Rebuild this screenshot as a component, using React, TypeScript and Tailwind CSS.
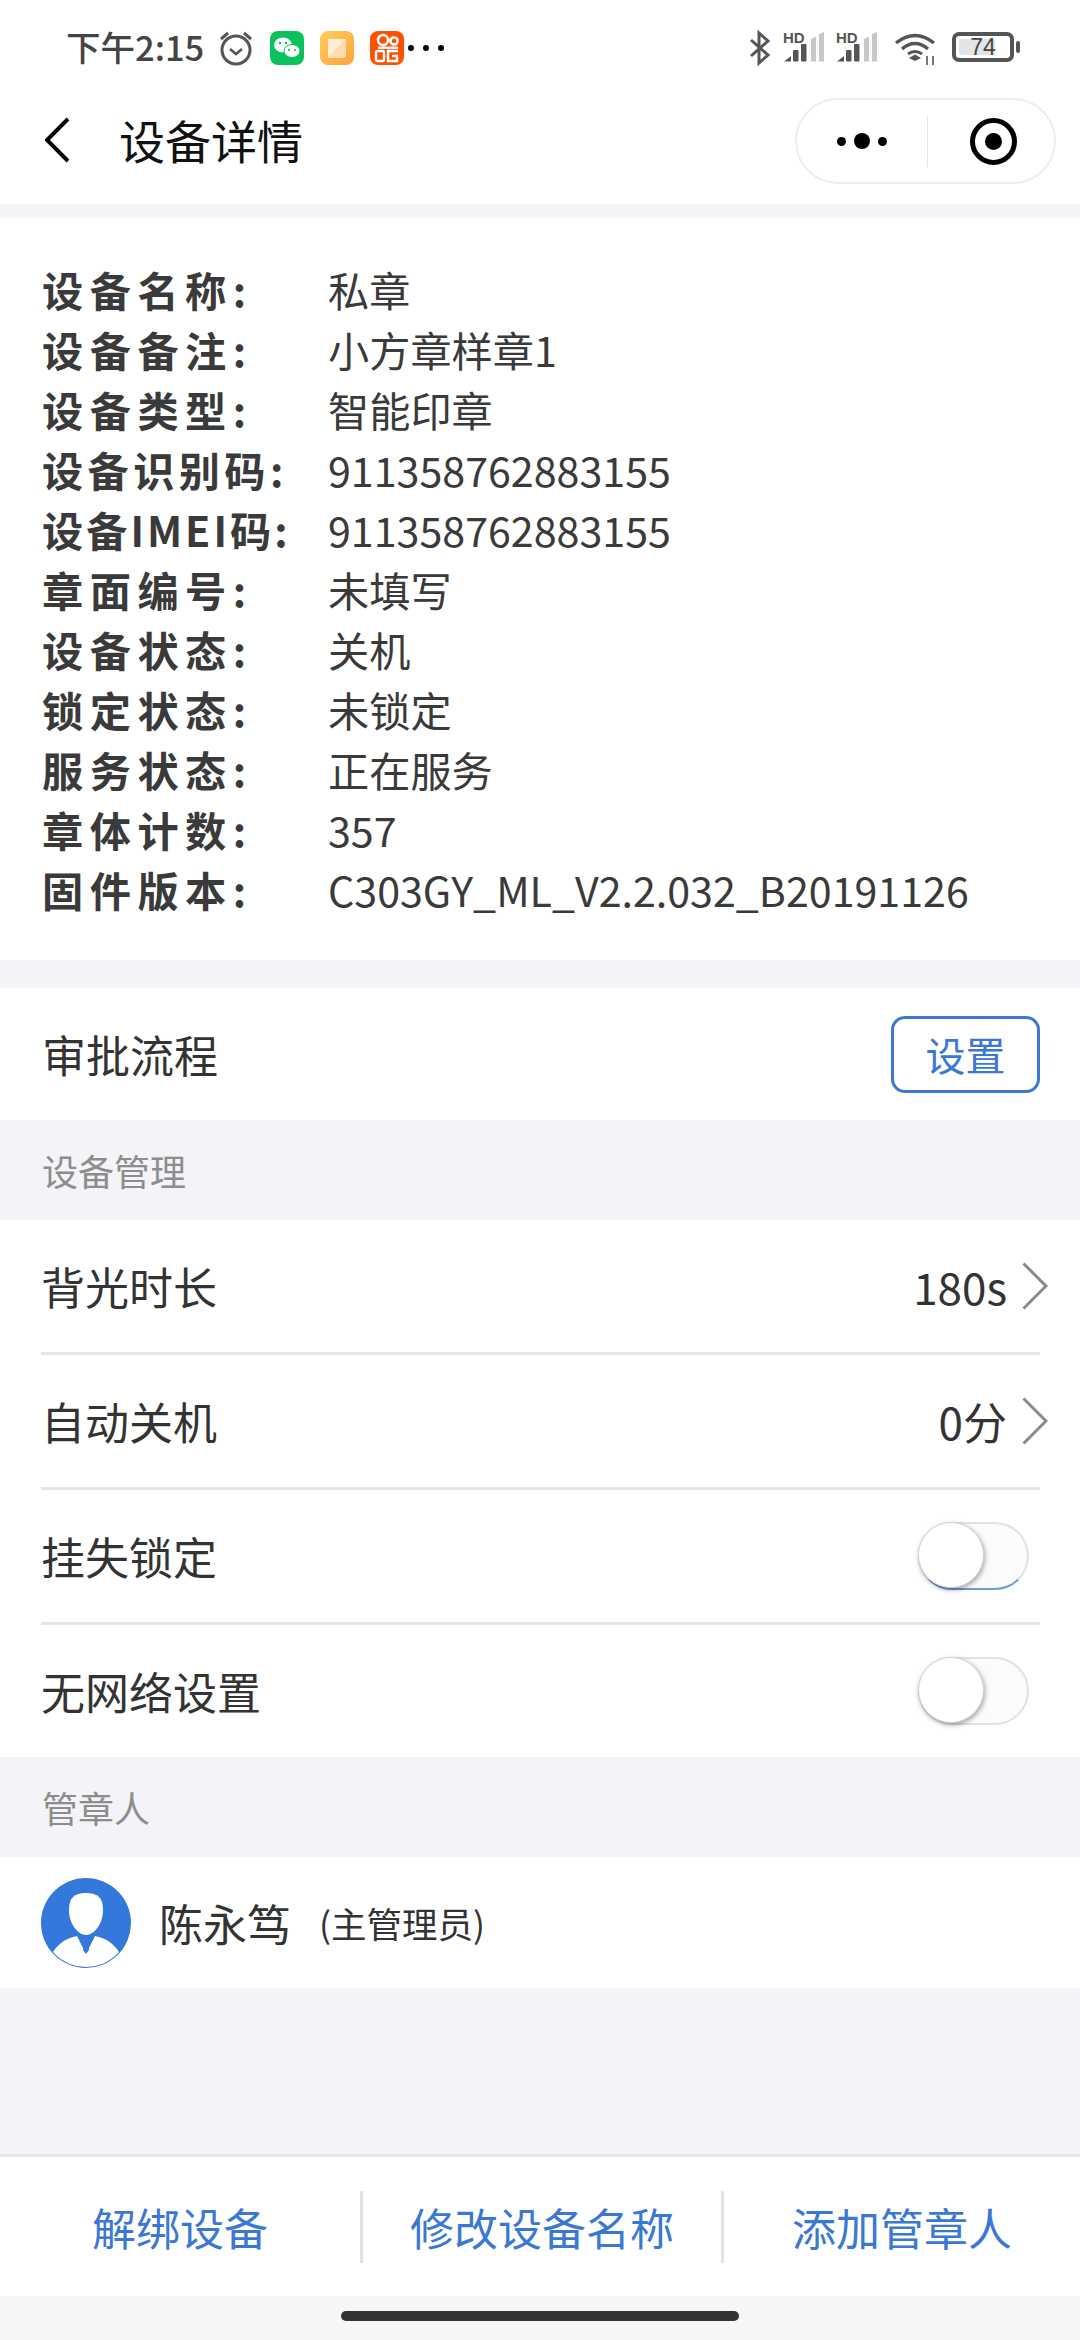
import React from "react";

const infoRows: { label: string; value: string; track: string }[] = [
  { label: "设备名称:", value: "私章", track: "tracking-[6.5px]" },
  { label: "设备备注:", value: "小方章样章1", track: "tracking-[6.5px]" },
  { label: "设备类型:", value: "智能印章", track: "tracking-[6.5px]" },
  { label: "设备识别码:", value: "911358762883155", track: "tracking-[4.4px]" },
  { label: "设备IMEI码:", value: "911358762883155", track: "tracking-[3px]" },
  { label: "章面编号:", value: "未填写", track: "tracking-[6.5px]" },
  { label: "设备状态:", value: "关机", track: "tracking-[6.5px]" },
  { label: "锁定状态:", value: "未锁定", track: "tracking-[6.5px]" },
  { label: "服务状态:", value: "正在服务", track: "tracking-[6.5px]" },
  { label: "章体计数:", value: "357", track: "tracking-[6.5px]" },
  { label: "固件版本:", value: "C303GY_ML_V2.2.032_B20191126", track: "tracking-[6.5px]" },
];

function Signal() {
  return (
    <svg width="42" height="34" viewBox="0 -2 42 34" className="block mb-[4px]">
      <text x="0" y="12" fontFamily="Liberation Sans" fontWeight="700" fontSize="15" fill="#555">HD</text>
      <path d="M1 30.5 L8 25 V30.5 Z" fill="#555" />
      <rect x="10" y="19" width="5.5" height="11.5" rx="1" fill="#555" />
      <rect x="18" y="13" width="5.5" height="17.5" rx="1" fill="#555" />
      <path d="M28 8 L33 5.5 V30.5 H28 Z" fill="#c8c8c8" />
      <path d="M36 3 L41 1 V30.5 H36 Z" fill="#c8c8c8" />
    </svg>
  );
}

function Chevron() {
  return (
    <svg width="26" height="48" viewBox="0 0 26 48" className="block">
      <path d="M1.5 1.5 L24 24 L1.5 46.5" fill="none" stroke="#8a8a8a" strokeWidth="3" />
    </svg>
  );
}

function Toggle({ blue }: { blue?: boolean }) {
  return (
    <div className={`relative w-[111px] h-[68px] rounded-full border-2 border-[#dfe2e6] bg-[#fbfbfb] ${blue ? "border-b-[#6f9ad8]" : ""}`}>
      <div className="absolute left-[-2px] top-[-2px] w-[66px] h-[66px] rounded-full bg-white border border-[#d4d4d4] shadow-[1px_2px_5px_rgba(0,0,0,0.35)]" />
    </div>
  );
}

function SectionTitle({ text }: { text: string }) {
  return <div className="h-[100px] px-[42px] flex items-center text-[36px] text-[#8d8d8d] shrink-0">{text}</div>;
}

function SettingRow({ label, last, children }: { label: string; last?: boolean; children: React.ReactNode }) {
  return (
    <div className={`ml-[41px] mr-[40px] flex items-center justify-between ${last ? "h-[132px]" : "h-[135px] border-b-[3px] border-[#e5e5e5]"}`}>
      <span className="text-[44px] text-[#333]">{label}</span>
      {children}
    </div>
  );
}

export default function App() {
  return (
    <div className="w-[1080px] h-[2340px] flex flex-col bg-[#f3f3f8] font-['Noto_Sans_CJK_SC','Noto_Sans',sans-serif] overflow-hidden">
      {/* status bar */}
      <div className="h-[94px] bg-white flex items-center pl-[66px] pr-[66px] pt-[2px] shrink-0">
        <span className="text-[34.5px] font-medium text-[#444] leading-none w-[152px] whitespace-nowrap mb-[3px]">下午2:15</span>
        <svg width="36" height="36" viewBox="0 0 36 36">
          <circle cx="18" cy="20" r="14" fill="none" stroke="#555" strokeWidth="3" />
          <path d="M12 19 L18 24 L24 19" fill="none" stroke="#555" strokeWidth="2.5" />
          <path d="M3 9 L10 3 M33 9 L26 3" stroke="#555" strokeWidth="3" />
        </svg>
        <svg width="34" height="34" viewBox="0 0 34 34" className="ml-[16px]">
          <rect width="34" height="34" rx="8" fill="#0ac15c" />
          <ellipse cx="13" cy="14" rx="9" ry="7.5" fill="#fff" />
          <ellipse cx="22" cy="20" rx="8" ry="6.5" fill="#fff" stroke="#0ac15c" strokeWidth="1" />
          <circle cx="10" cy="12" r="1.2" fill="#0ac15c" />
          <circle cx="16" cy="12" r="1.2" fill="#0ac15c" />
          <circle cx="19" cy="19" r="1.1" fill="#0ac15c" />
          <circle cx="25" cy="19" r="1.1" fill="#0ac15c" />
        </svg>
        <svg width="34" height="34" viewBox="0 0 34 34" className="ml-[16px]">
          <defs>
            <linearGradient id="og" x1="0" y1="0" x2="1" y2="1">
              <stop offset="0" stopColor="#ffcf5c" />
              <stop offset="1" stopColor="#ffa23a" />
            </linearGradient>
          </defs>
          <rect width="34" height="34" rx="8" fill="url(#og)" />
          <path d="M8 8 H26 V11 L10 27 H8 Z" fill="#ffeed6" />
          <path d="M8 27 L26 8 V24 Q26 27 23 27 Z" fill="#ffdcae" />
        </svg>
        <svg width="34" height="34" viewBox="0 0 34 34" className="ml-[16px]">
          <rect width="34" height="34" rx="8" fill="#ff5000" />
          <circle cx="13" cy="9" r="5" fill="none" stroke="#fff" strokeWidth="2.5" />
          <circle cx="24" cy="10" r="3.6" fill="none" stroke="#fff" strokeWidth="2.5" />
          <rect x="8" y="15.5" width="20" height="2.5" fill="#fff" />
          <rect x="6" y="20" width="8" height="10" rx="1.5" fill="none" stroke="#fff" strokeWidth="2.4" />
          <path d="M28 20 H18 V30 H27 V25 H22" fill="none" stroke="#fff" strokeWidth="2.4" />
        </svg>
        <div className="ml-[4px] flex gap-[9px]">
          <div className="w-[6px] h-[6px] rounded-full bg-black" />
          <div className="w-[6px] h-[6px] rounded-full bg-black" />
          <div className="w-[6px] h-[6px] rounded-full bg-black" />
        </div>
        <div className="flex-1" />
        <svg width="22" height="36" viewBox="0 0 22 36">
          <path d="M2 10 L19 25 L10 33 V3 L19 11 L2 26" fill="none" stroke="#555" strokeWidth="3" />
        </svg>
        <div className="ml-[12px]"><Signal /></div>
        <div className="ml-[11px]"><Signal /></div>
        <svg width="42" height="34" viewBox="0 0 42 34" className="ml-[16px] mt-[2px]">
          <path d="M2 11 Q21 -4 40 11" fill="none" stroke="#555" strokeWidth="3.5" />
          <path d="M8 17 Q21 6 34 17" fill="none" stroke="#555" strokeWidth="3.5" />
          <path d="M14 22 Q21 17 28 22" fill="none" stroke="#555" strokeWidth="3" />
          <path d="M15 26 L21 22.5 L27 26 L21 29 Z" fill="#555" />
          <path d="M33 24 V33 M39 24 V33" stroke="#555" strokeWidth="1.6" />
        </svg>
        <div className="ml-[16px] relative w-[62px] h-[30px] rounded-[7px] border-[4px] border-[#555] flex items-center justify-center mb-[2px]">
          <div className="absolute left-[3px] top-[3px] bottom-[3px] w-[36px] rounded-[3px] bg-[#e4e4e4]" />
          <span className="relative text-[23px] leading-none text-[#444] font-['Liberation_Sans',sans-serif]">74</span>
          <div className="absolute right-[-10px] top-[5px] w-[4px] h-[12px] rounded-[2px] bg-[#555]" />
        </div>
      </div>

      {/* nav bar */}
      <div className="h-[110px] bg-white flex items-center pl-[45px] pr-[24px] shrink-0 relative">
        <svg width="24" height="46" viewBox="0 0 24 46" className="mb-[18px]">
          <path d="M23 2 L2 23 L23 44" fill="none" stroke="#000" strokeWidth="4" />
        </svg>
        <span className="ml-[50px] text-[46px] text-[#111] leading-none mb-[20px]">设备详情</span>
        <div className="flex-1" />
        <div className="w-[261px] h-[86px] mb-[16px] rounded-full border-2 border-[#eeeeee] flex items-center">
          <div className="w-[130px] flex items-center justify-center gap-[8px]">
            <div className="w-[9px] h-[9px] rounded-full bg-black" />
            <div className="w-[16px] h-[16px] rounded-full bg-black" />
            <div className="w-[9px] h-[9px] rounded-full bg-black" />
          </div>
          <div className="w-[1px] h-[51px] bg-[#e5e5e5]" />
          <div className="flex-1 flex items-center justify-center pl-[4px]">
            <div className="w-[47px] h-[47px] rounded-full border-[5px] border-black flex items-center justify-center">
              <div className="w-[17px] h-[17px] rounded-full bg-black" />
            </div>
          </div>
        </div>
      </div>

      {/* info card */}
      <div className="mt-[14px] h-[742px] bg-white pt-[41px] pl-[42px] shrink-0">
        {infoRows.map((r) => (
          <div key={r.label} className="flex h-[60px] items-center leading-[60px] text-[41.2px] text-[#3a3a3a]">
            <span className={`w-[286px] shrink-0 font-bold whitespace-nowrap ${r.track}`}>{r.label}</span>
            <span className="whitespace-nowrap">{r.value}</span>
          </div>
        ))}
      </div>

      {/* approval */}
      <div className="mt-[28px] h-[132px] bg-white flex items-center justify-between pl-[42px] pr-[40px] shrink-0">
        <span className="text-[44px] text-[#333]">审批流程</span>
        <div className="w-[149px] h-[77px] rounded-[14px] border-[3px] border-[#3a78d4] flex items-center justify-center text-[40px] text-[#3a78d4]">
          设置
        </div>
      </div>

      <SectionTitle text="设备管理" />

      <div className="bg-white shrink-0">
        <SettingRow label="背光时长">
          <div className="flex items-center gap-[15px] mr-[-8px]">
            <span className="text-[44px] text-[#333]">180s</span>
            <Chevron />
          </div>
        </SettingRow>
        <SettingRow label="自动关机">
          <div className="flex items-center gap-[15px] mr-[-8px]">
            <span className="text-[44px] text-[#333]">0分</span>
            <Chevron />
          </div>
        </SettingRow>
        <SettingRow label="挂失锁定">
          <div className="mr-[11px]"><Toggle blue /></div>
        </SettingRow>
        <SettingRow label="无网络设置" last>
          <div className="mr-[11px]"><Toggle /></div>
        </SettingRow>
      </div>

      <SectionTitle text="管章人" />

      <div className="h-[131px] bg-white flex items-center pl-[41px] shrink-0">
        <svg width="90" height="90" viewBox="0 0 90 90">
          <defs>
            <clipPath id="av"><circle cx="45" cy="45" r="44" /></clipPath>
          </defs>
          <circle cx="45" cy="45" r="45" fill="#3578dc" />
          <g clipPath="url(#av)">
            <path d="M45 15 C33 15 28 20 28 32 C28 46 37 57 45 57 C53 57 62 46 62 32 C62 20 57 15 45 15 Z" fill="#fff" />
            <path d="M12 74 C17 66 25 60 36 58 L43 72 L45 66 L47 72 L54 58 C65 60 73 66 78 74 L78 92 L12 92 Z" fill="#fff" />
            <path d="M42 60 L45 57 L48 60 L46.5 63 L48 72 L45 76 L42 72 L43.5 63 Z" fill="#3578dc" />
          </g>
        </svg>
        <span className="ml-[28px] text-[44px] text-[#333] leading-none">陈永笃</span>
        <span className="ml-[28px] text-[35.5px] text-[#333] leading-none">(主管理员)</span>
      </div>

      <div className="flex-1" />

      {/* footer */}
      <div className="h-[142px] bg-white border-t-[3px] border-[#e7e7e7] flex items-center shrink-0">
        <div className="w-[360px] text-center text-[44px] text-[#3a78d4]">解绑设备</div>
        <div className="w-[3px] h-[72px] bg-[#e2e2e2]" />
        <div className="w-[358px] text-center text-[44px] text-[#3a78d4]">修改设备名称</div>
        <div className="w-[3px] h-[72px] bg-[#e2e2e2]" />
        <div className="flex-1 text-center text-[44px] text-[#3a78d4]">添加管章人</div>
      </div>

      {/* gesture bar */}
      <div className="h-[44px] bg-[#f6f6f6] flex justify-center pt-[15px] shrink-0">
        <div className="w-[398px] h-[10px] rounded-full bg-[#333]" />
      </div>
    </div>
  );
}
